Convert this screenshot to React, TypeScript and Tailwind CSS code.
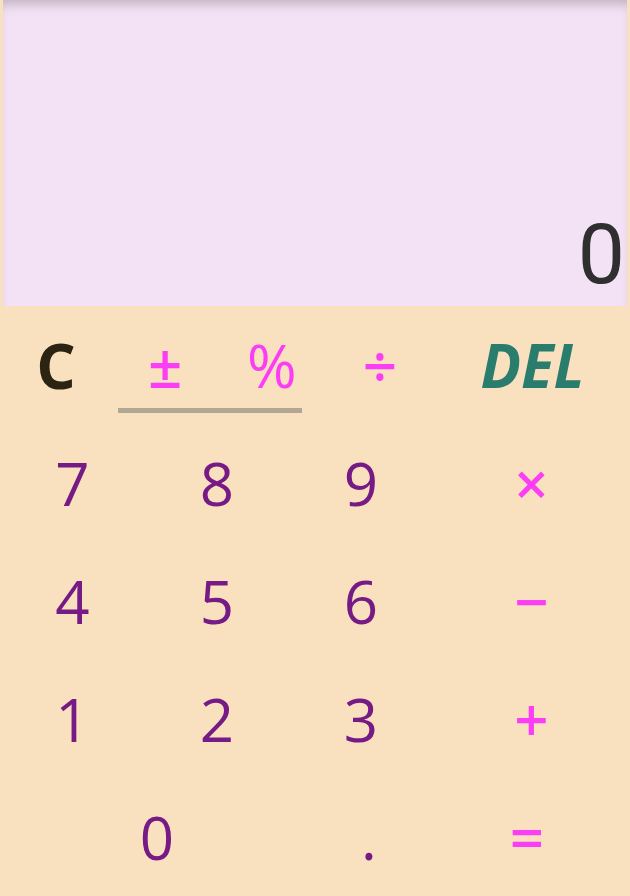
import React from "react";

const digit = "text-[60px] font-medium leading-none text-[#761a85]";
const op = "text-[60px] font-semibold leading-none text-[#fb3ef5]";

function Key({ label, className, width }: { label: string; className: string; width: string }) {
  return (
    <button type="button" className={`flex h-full items-center justify-center ${width}`}>
      <span className={className}>{label}</span>
    </button>
  );
}

export default function App() {
  const rows = [
    ["7", "8", "9", "×"],
    ["4", "5", "6", "−"],
    ["1", "2", "3", "+"],
  ];

  return (
    <div
      className="flex h-[896px] w-[630px] flex-col overflow-hidden bg-[#f9e1bf]"
      style={{ fontFamily: "'Open Sans', 'Noto Sans', sans-serif" }}
    >
      {/* display */}
      <div className="mx-[3px] flex h-[306px] items-end justify-end bg-[#f3e2f5] pr-[2px] shadow-[inset_0_10px_12px_-6px_rgba(0,0,0,0.22)]">
        <span className="mb-[9px] font-['Roboto',sans-serif] text-[84px] leading-none text-[#2f2f2f]">0</span>
      </div>

      {/* keypad */}
      <div className="flex flex-1 flex-col">
        <div className="flex h-[118px]">
          <Key label="C" width="w-[112px]" className="text-[62px] font-bold leading-none text-[#2b2412]" />
          <div className="relative flex w-[213px]">
            <Key label="±" width="w-1/2" className={op} />
            <Key label="%" width="w-1/2" className="text-[60px] font-medium leading-none text-[#fb3ef5]" />
            <div className="absolute bottom-[11px] left-[6px] h-[5px] w-[184px] bg-[#b1a793]" />
          </div>
          <Key label="÷" width="w-[110px]" className={op} />
          <Key label="DEL" width="flex-1" className="text-[60px] font-bold italic leading-none text-[#2a7d6c]" />
        </div>

        {rows.map((r) => (
          <div key={r[0]} className="flex h-[118px]">
            <Key label={r[0]} width="w-[145px]" className={digit} />
            <Key label={r[1]} width="w-[144px]" className={digit} />
            <Key label={r[2]} width="w-[144px]" className={digit} />
            <Key label={r[3]} width="flex-1" className={op} />
          </div>
        ))}

        <div className="flex h-[118px]">
          <Key label="0" width="w-[314px]" className={digit} />
          <Key label="." width="w-[110px]" className={digit} />
          <Key label="=" width="flex-1" className={op} />
        </div>
      </div>
    </div>
  );
}
